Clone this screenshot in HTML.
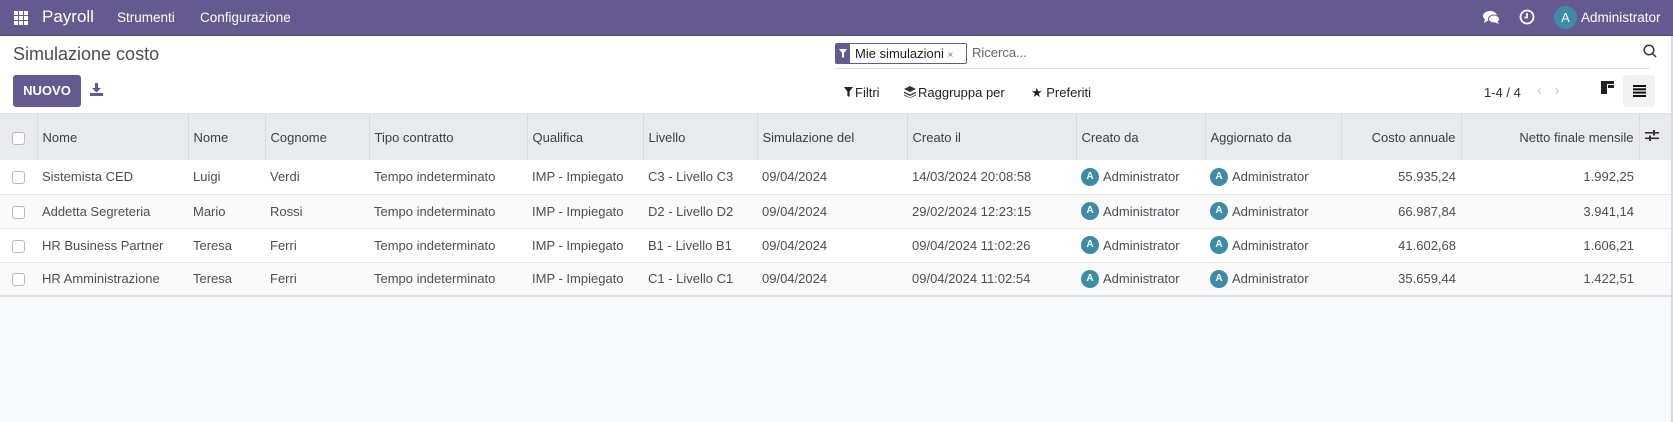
<!DOCTYPE html>
<html><head><meta charset="utf-8"><style>
*{box-sizing:border-box;margin:0;padding:0}
body{width:1673px;height:422px;overflow:hidden;background:#f8f9fa;font-family:"Liberation Sans",sans-serif;color:#4a4f54;position:relative}
.nav{position:absolute;left:0;top:0;width:1673px;height:36px;background:#655a8f;color:#fff;border-bottom:1px solid #524878}
.a{position:absolute;white-space:nowrap}
.top{position:absolute;left:0;top:36px;width:1673px;height:78px;background:#fff;border-bottom:1px solid #dee2e6}
table{position:absolute;left:0;top:114px;border-collapse:collapse;table-layout:fixed;width:1671px;font-size:13px}
td,th{height:34px;padding:0 5px;white-space:nowrap;overflow:hidden;text-align:left;font-weight:normal;color:#4a4f54;vertical-align:middle}
th{height:46px;background:#e8eaed;border-left:1px solid #d8dadd;color:#3c4045}
th:first-child{border-left:none}
tr.b td{background:#fff;border-bottom:1px solid #e6e7e9}
tr.g td{background:#fafafa;border-bottom:1px solid #e6e7e9}
tr.l td{border-bottom:2px solid #dfe1e4}
.r{text-align:right}
.cb{display:inline-block;width:13px;height:13px;border:1px solid #b8bcc0;border-radius:3px;background:#fff;vertical-align:middle;margin-left:7px}
.u{display:flex;align-items:center}
.av{display:inline-block;width:18px;height:18px;border-radius:50%;background:#3d8ba6;color:#fff;font-size:10px;text-align:center;line-height:18px;margin-right:4px;font-weight:bold}
</style></head><body>
<div class="nav">
 <svg class="a" style="left:14px;top:11px" width="14" height="14" viewBox="0 0 14 14" fill="#fff"><rect x="0" y="0" width="4" height="4"/><rect x="5" y="0" width="4" height="4"/><rect x="10" y="0" width="4" height="4"/><rect x="0" y="5" width="4" height="4"/><rect x="5" y="5" width="4" height="4"/><rect x="10" y="5" width="4" height="4"/><rect x="0" y="10" width="4" height="4"/><rect x="5" y="10" width="4" height="4"/><rect x="10" y="10" width="4" height="4"/></svg>
 <div class="a" style="left:42px;top:7px;font-size:17px">Payroll</div>
 <div class="a" style="left:117px;top:10px;font-size:13.5px">Strumenti</div>
 <div class="a" style="left:200px;top:10px;font-size:13.5px">Configurazione</div>
 <svg class="a" style="left:1483px;top:10px" width="17" height="15" viewBox="0 0 17 15" fill="#fff"><ellipse cx="7" cy="6" rx="7" ry="5"/><path d="M2 9 L1 13 L6 10Z"/><ellipse cx="11" cy="9" rx="5.5" ry="4" stroke="#655a8f" stroke-width="1"/><path d="M14 11 L16 14 L11 12Z"/></svg>
 <svg class="a" style="left:1519px;top:9px" width="16" height="16" viewBox="0 0 16 16" fill="none" stroke="#fff" stroke-width="1.8"><circle cx="8" cy="8" r="6.5"/><path d="M8 4v4.5h-2.5"/></svg>
 <div class="a" style="left:1554px;top:6px;width:23px;height:23px;border-radius:50%;background:#3d8ba6;font-size:13px;text-align:center;line-height:23px">A</div>
 <div class="a" style="left:1581px;top:10px;font-size:13.5px">Administrator</div>
</div>
<div class="top">
 <div class="a" style="left:13px;top:8px;font-size:18px;color:#4a4f54">Simulazione costo</div>
 <div class="a" style="left:13px;top:39px;width:68px;height:32px;background:#655a8f;border-radius:3px;color:#fff;font-size:13px;font-weight:bold;text-align:center;line-height:32px">NUOVO</div>
 <svg class="a" style="left:90px;top:47px" width="13" height="13" viewBox="0 0 13 13" fill="#655a8f"><path d="M5 0h3v5h3l-4.5 4.5L2 5h3z"/><rect x="0" y="10" width="13" height="3"/></svg>
 <div class="a" style="left:835px;top:7px;width:132px;height:21px;border:1px solid #655a8f;border-radius:2px;background:#fff">
  <div class="a" style="left:0;top:0;width:14px;height:19px;background:#655a8f"></div>
  <svg class="a" style="left:3px;top:5px" width="8" height="9" viewBox="0 0 8 9" fill="#fff"><path d="M0 0h8L5 4v5L3 8V4z"/></svg>
  <div class="a" style="left:19px;top:2px;font-size:13px;color:#222">Mie simulazioni <span style="font-size:10px;color:#777">×</span></div>
 </div>
 <div class="a" style="left:972px;top:9px;font-size:13px;color:#666">Ricerca...</div>
 <svg class="a" style="left:1643px;top:8px" width="14" height="14" viewBox="0 0 14 14" fill="none" stroke="#333" stroke-width="1.5"><circle cx="6" cy="6" r="4.8"/><path d="M9.5 9.5L13 13"/></svg>
 <div class="a" style="left:835px;top:32px;width:815px;height:1px;background:#dee2e6"></div>
 <svg class="a" style="left:844px;top:51px" width="9" height="10" viewBox="0 0 8 9" fill="#222"><path d="M0 0h8L5 4v5L3 8V4z"/></svg>
 <div class="a" style="left:855px;top:49px;font-size:13px;color:#222">Filtri</div>
 <svg class="a" style="left:904px;top:50px" width="12" height="12" viewBox="0 0 12 12" fill="#333"><path d="M6 0L12 3 6 6 0 3z"/><path d="M0 5.5L6 8.5 12 5.5 12 7 6 10 0 7z"/><path d="M0 8.5L6 11.5 12 8.5 12 9.5 6 12 0 9.5z"/></svg>
 <div class="a" style="left:918px;top:49px;font-size:13px;color:#222">Raggruppa per</div>
 <div class="a" style="left:1031px;top:49px;font-size:13px;color:#222">★ Preferiti</div>
 <div class="a" style="left:1484px;top:49px;font-size:13px;color:#333">1-4 / 4</div>
 <div class="a" style="left:1537px;top:46px;font-size:15px;color:#ccc">‹&nbsp;&nbsp;&nbsp;›</div>
 <svg class="a" style="left:1601px;top:45px" width="13" height="13" viewBox="0 0 13 13" fill="#222"><rect x="0" y="0" width="13" height="3"/><rect x="0" y="0" width="6" height="13"/><rect x="7" y="4" width="6" height="3"/></svg>
 <div class="a" style="left:1623px;top:39px;width:32px;height:32px;background:#f1f2f4;border-radius:3px"></div>
 <svg class="a" style="left:1633px;top:49px" width="13" height="12" viewBox="0 0 13 12" fill="#111"><rect y="0" width="13" height="2"/><rect y="3.3" width="13" height="2"/><rect y="6.6" width="13" height="2"/><rect y="10" width="13" height="2"/></svg>
</div>
<table>
<colgroup><col style="width:37px"><col style="width:151px"><col style="width:77px"><col style="width:104px"><col style="width:158px"><col style="width:116px"><col style="width:114px"><col style="width:150px"><col style="width:169px"><col style="width:129px"><col style="width:136px"><col style="width:120px"><col style="width:178px"><col style="width:32px"></colgroup>
<tr><th><span class="cb" style="margin-left:7px"></span></th><th>Nome</th><th>Nome</th><th>Cognome</th><th>Tipo contratto</th><th>Qualifica</th><th>Livello</th><th>Simulazione del</th><th>Creato il</th><th>Creato da</th><th>Aggiornato da</th><th class="r">Costo annuale</th><th class="r">Netto finale mensile</th><th><svg width="14" height="13" viewBox="0 0 14 13" fill="#333"><rect y="3" width="14" height="1.6"/><rect y="8.5" width="14" height="1.6"/><rect x="8" y="1" width="2" height="5.5"/><rect x="4" y="6.5" width="2" height="5.5"/></svg></th></tr>
<tr class="b"><td><span class="cb"></span></td><td>Sistemista CED</td><td>Luigi</td><td>Verdi</td><td>Tempo indeterminato</td><td>IMP - Impiegato</td><td>C3 - Livello C3</td><td>09/04/2024</td><td>14/03/2024 20:08:58</td><td><div class="u"><span class="av">A</span>Administrator</div></td><td><div class="u"><span class="av">A</span>Administrator</div></td><td class="r">55.935,24</td><td class="r">1.992,25</td><td></td></tr>
<tr class="g"><td><span class="cb"></span></td><td>Addetta Segreteria</td><td>Mario</td><td>Rossi</td><td>Tempo indeterminato</td><td>IMP - Impiegato</td><td>D2 - Livello D2</td><td>09/04/2024</td><td>29/02/2024 12:23:15</td><td><div class="u"><span class="av">A</span>Administrator</div></td><td><div class="u"><span class="av">A</span>Administrator</div></td><td class="r">66.987,84</td><td class="r">3.941,14</td><td></td></tr>
<tr class="b"><td><span class="cb"></span></td><td>HR Business Partner</td><td>Teresa</td><td>Ferri</td><td>Tempo indeterminato</td><td>IMP - Impiegato</td><td>B1 - Livello B1</td><td>09/04/2024</td><td>09/04/2024 11:02:26</td><td><div class="u"><span class="av">A</span>Administrator</div></td><td><div class="u"><span class="av">A</span>Administrator</div></td><td class="r">41.602,68</td><td class="r">1.606,21</td><td></td></tr>
<tr class="g l"><td><span class="cb"></span></td><td>HR Amministrazione</td><td>Teresa</td><td>Ferri</td><td>Tempo indeterminato</td><td>IMP - Impiegato</td><td>C1 - Livello C1</td><td>09/04/2024</td><td>09/04/2024 11:02:54</td><td><div class="u"><span class="av">A</span>Administrator</div></td><td><div class="u"><span class="av">A</span>Administrator</div></td><td class="r">35.659,44</td><td class="r">1.422,51</td><td></td></tr>
</table>
<div class="a" style="left:1671px;top:36px;width:2px;height:386px;background:#d8dadd"></div>
</body></html>
